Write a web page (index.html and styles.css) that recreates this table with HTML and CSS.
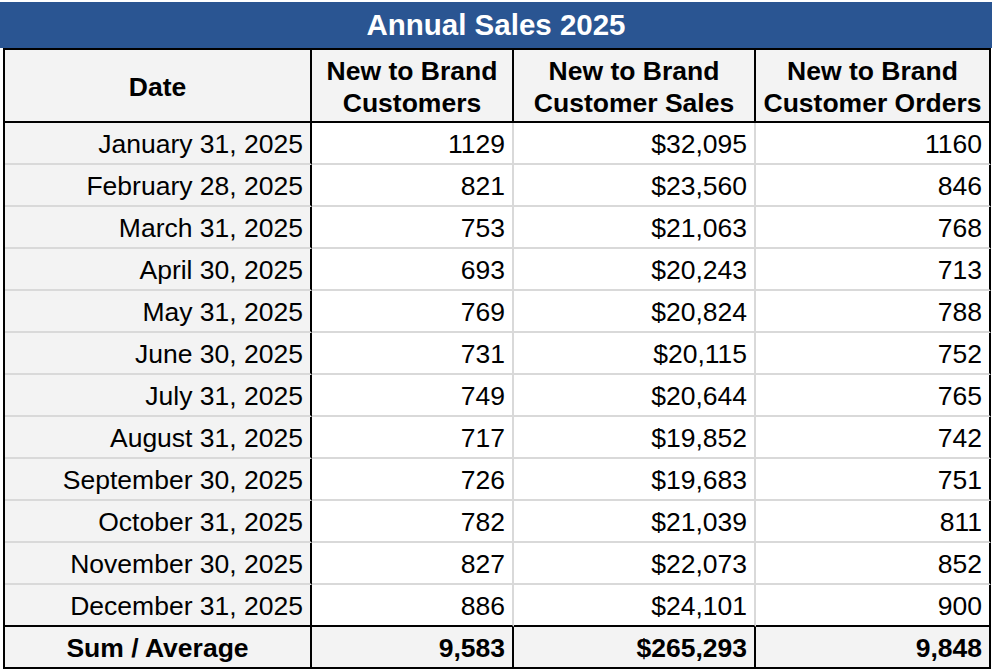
FILE: index.html
```html
<!DOCTYPE html>
<html lang="en">
<head>
<meta charset="utf-8">
<title>Annual Sales 2025</title>
<link rel="stylesheet" href="styles.css">
</head>
<body>
<div class="sheet">
  <div class="title">Annual Sales 2025</div>
  <div class="table">
    <div class="cell head date">Date</div>
    <div class="cell head">New to Brand<br>Customers</div>
    <div class="cell head">New to Brand<br>Customer Sales</div>
    <div class="cell head last">New to Brand<br>Customer Orders</div>

    <div class="cell date">January 31, 2025</div><div class="cell num">1129</div><div class="cell num">$32,095</div><div class="cell num last">1160</div>
    <div class="cell date">February 28, 2025</div><div class="cell num">821</div><div class="cell num">$23,560</div><div class="cell num last">846</div>
    <div class="cell date">March 31, 2025</div><div class="cell num">753</div><div class="cell num">$21,063</div><div class="cell num last">768</div>
    <div class="cell date">April 30, 2025</div><div class="cell num">693</div><div class="cell num">$20,243</div><div class="cell num last">713</div>
    <div class="cell date">May 31, 2025</div><div class="cell num">769</div><div class="cell num">$20,824</div><div class="cell num last">788</div>
    <div class="cell date">June 30, 2025</div><div class="cell num">731</div><div class="cell num">$20,115</div><div class="cell num last">752</div>
    <div class="cell date">July 31, 2025</div><div class="cell num">749</div><div class="cell num">$20,644</div><div class="cell num last">765</div>
    <div class="cell date">August 31, 2025</div><div class="cell num">717</div><div class="cell num">$19,852</div><div class="cell num last">742</div>
    <div class="cell date">September 30, 2025</div><div class="cell num">726</div><div class="cell num">$19,683</div><div class="cell num last">751</div>
    <div class="cell date">October 31, 2025</div><div class="cell num">782</div><div class="cell num">$21,039</div><div class="cell num last">811</div>
    <div class="cell date">November 30, 2025</div><div class="cell num">827</div><div class="cell num">$22,073</div><div class="cell num last">852</div>
    <div class="cell date end">December 31, 2025</div><div class="cell num end">886</div><div class="cell num end">$24,101</div><div class="cell num last end">900</div>

    <div class="cell total label">Sum / Average</div>
    <div class="cell total num">9,583</div>
    <div class="cell total num">$265,293</div>
    <div class="cell total num last">9,848</div>
  </div>
</div>
</body>
</html>
```

FILE: styles.css
```css
html, body {
  margin: 0;
  padding: 0;
  background: #ffffff;
}

body {
  padding-top: 2px;
  font-family: "Liberation Sans", Arial, Helvetica, sans-serif;
  color: #000;
}

.sheet {
  width: 992px;
}

.title {
  height: 46px;
  background: #2a5592;
  color: #ffffff;
  font-weight: bold;
  font-size: 29.5px;
  line-height: 46px;
  text-align: center;
}

.table {
  margin-left: 3px;
  width: 988px;
  display: grid;
  grid-template-columns: 307px 202px 242px 235px;
  border-left: 2px solid #000;
  border-top: 2px solid #000;
  box-sizing: border-box;
  font-size: 26.5px;
}

.cell {
  height: 42px;
  box-sizing: border-box;
  border-right: 2px solid #d9d9d9;
  border-bottom: 2px solid #d9d9d9;
  display: flex;
  align-items: center;
  justify-content: flex-end;
  padding-right: 7px;
  padding-top: 3px;
  background: #ffffff;
  white-space: nowrap;
}

.cell.date {
  background: #f3f3f3;
  border-right-color: #000;
}

.cell.last {
  border-right-color: #000;
}

.cell.end {
  border-bottom-color: #000;
}

.cell.head {
  height: 73px;
  background: #f3f3f3;
  font-weight: bold;
  text-align: center;
  justify-content: center;
  padding-right: 0;
  padding-top: 2px;
  line-height: 32px;
  border-right-color: #000;
  border-bottom-color: #000;
}

.cell.total {
  background: #f3f3f3;
  font-weight: bold;
  border-right-color: #000;
  border-bottom-color: #000;
}

.cell.total.label {
  justify-content: center;
  padding-right: 0;
}
```
